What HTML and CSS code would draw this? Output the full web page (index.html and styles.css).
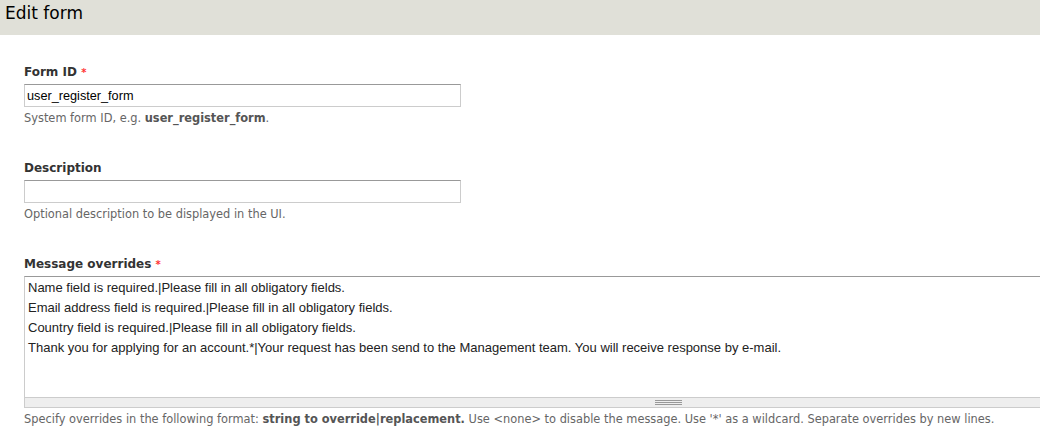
FILE: index.html
```html
<!DOCTYPE html>
<html>
<head>
<meta charset="utf-8">
<link rel="stylesheet" href="styles.css">
</head>
<body>
<div class="header"><h1 class="title">Edit form</h1></div>
<form class="content">
  <div class="form-item">
    <label class="label">Form ID <span class="req">*</span></label>
    <input class="text-input" type="text" value="user_register_form">
    <div class="desc">System form ID, e.g. <strong>user_register_form</strong>.</div>
  </div>
  <div class="form-item">
    <label class="label">Description</label>
    <input class="text-input" type="text" value="">
    <div class="desc">Optional description to be displayed in the UI.</div>
  </div>
  <div class="form-item">
    <label class="label">Message overrides <span class="req">*</span></label>
    <div class="textarea-wrap">
      <textarea class="textarea">Name field is required.|Please fill in all obligatory fields.
Email address field is required.|Please fill in all obligatory fields.
Country field is required.|Please fill in all obligatory fields.
Thank you for applying for an account.*|Your request has been send to the Management team. You will receive response by e-mail.</textarea>
      <div class="grippie"><span class="grip"></span></div>
    </div>
    <div class="desc">Specify overrides in the following format: <strong>string to override|replacement.</strong> Use &lt;none&gt; to disable the message. Use '*' as a wildcard. Separate overrides by new lines.</div>
  </div>
</form>
</body>
</html>
```
FILE: styles.css
```css
html, body {
  margin: 0;
  padding: 0;
  background: #fff;
  overflow: hidden;
}
body {
  font-family: "DejaVu Sans", Verdana, sans-serif;
  color: #333;
  width: 1040px;
  height: 441px;
}
.header {
  background: #e0e0d8;
  height: 35px;
  padding-left: 5px;
  box-sizing: border-box;
}
.title {
  margin: 0;
  font-size: 17px;
  font-weight: normal;
  line-height: 26px;
  color: #000;
}
.content {
  padding: 28px 0 0 24px;
  display: flex;
  flex-direction: column;
  gap: 33px;
  margin: 0;
}
.form-item {
  display: flex;
  flex-direction: column;
  align-items: flex-start;
}
.label {
  font-size: 12px;
  font-weight: bold;
  line-height: 19px;
  color: #333;
  margin-bottom: 2px;
}
.req {
  color: #f33;
  font-size: 10px;
}
.text-input {
  width: 437px;
  height: 23px;
  box-sizing: border-box;
  border: 1px solid #ccc;
  border-top-color: #999;
  padding: 2px 2px;
  margin: 0;
  font-family: "Liberation Sans", Arial, sans-serif;
  font-size: 12.7px;
  color: #000;
  background: #fff;
  outline: none;
}
.desc {
  font-size: 11.4px;
  color: #666;
  line-height: 15px;
  margin-top: 4px;
  white-space: nowrap;
}
.desc strong {
  color: #555;
}
.textarea-wrap {
  width: 1288px;
  display: flex;
  flex-direction: column;
}
.textarea {
  display: block;
  box-sizing: border-box;
  width: 100%;
  height: 122px;
  margin: 0;
  border: 1px solid #ccc;
  border-top-color: #999;
  padding: 1px 3px 2px;
  font-family: "Liberation Sans", Arial, sans-serif;
  font-size: 13px;
  line-height: 20px;
  color: #222;
  resize: none;
  outline: none;
  overflow: hidden;
}
.grippie {
  height: 10px;
  box-sizing: border-box;
  background: #eee;
  border: 1px solid #ccc;
  border-top-width: 0;
  display: flex;
  justify-content: center;
  align-items: center;
}
.grip {
  width: 27px;
  height: 5px;
  border-top: 1px solid #999;
  border-bottom: 1px solid #999;
  box-sizing: border-box;
}
.grip::after {
  content: "";
  display: block;
  border-top: 1px solid #999;
  margin-top: 1px;
}
```
